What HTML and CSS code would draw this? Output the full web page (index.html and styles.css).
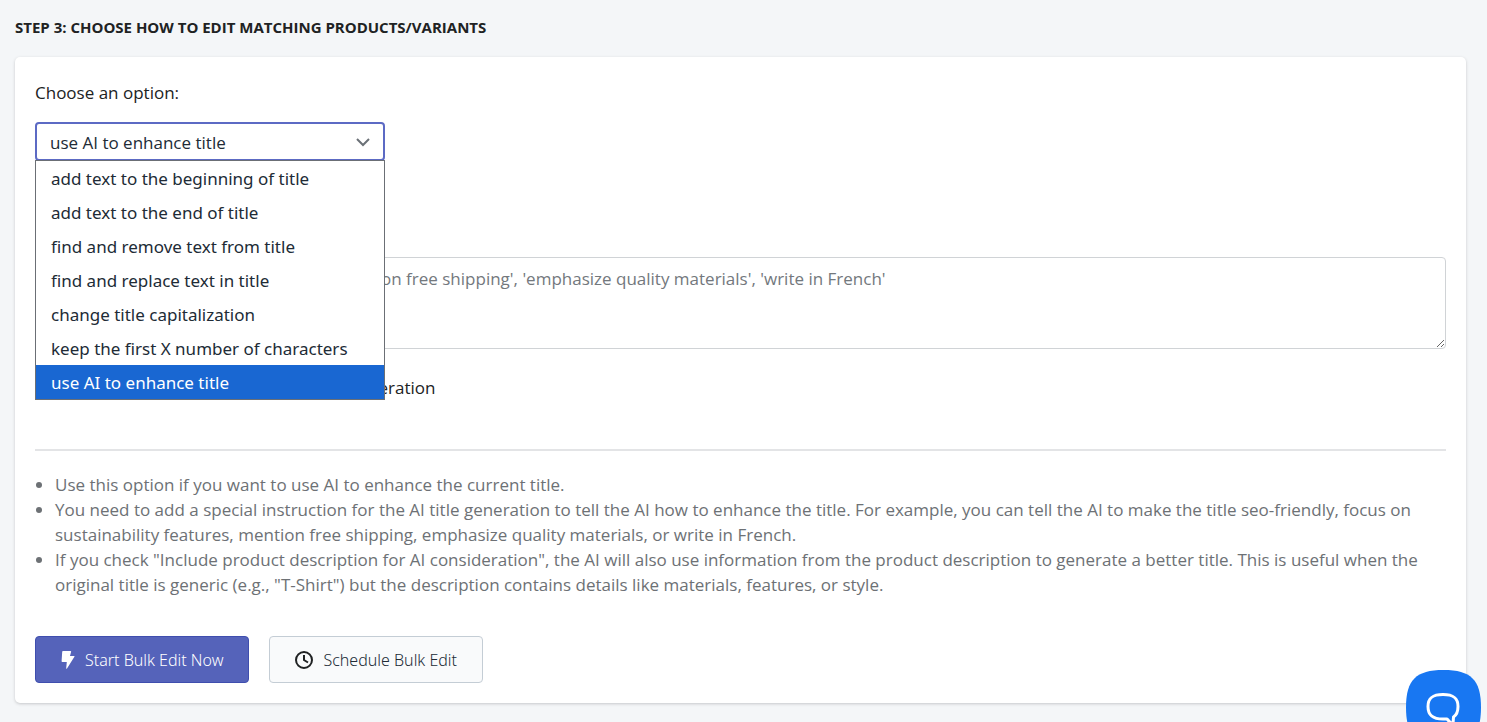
FILE: index.html
```html
<!DOCTYPE html>
<html lang="en">
<head>
  <meta charset="UTF-8" />
  <meta name="viewport" content="width=device-width, initial-scale=1.0" />
  <title>Bulk Edit - Step 3</title>
  <link rel="stylesheet" href="styles.css">
</head>
<body>
  <main class="page">
    <h2 class="step-title">Step 3: Choose how to edit matching products/variants</h2>

    <form class="card">
      <label class="field-label" for="editOption">Choose an option:</label>
      <div class="select-wrap">
        <select id="editOption" class="select" name="editOption">
          <option>add text to the beginning of title</option>
          <option>add text to the end of title</option>
          <option>find and remove text from title</option>
          <option>find and replace text in title</option>
          <option>change title capitalization</option>
          <option>keep the first X number of characters</option>
          <option selected>use AI to enhance title</option>
        </select>
        <svg class="chevron" viewBox="0 0 16 16" aria-hidden="true"><path d="M2 5l6 6 6-6" /></svg>
        <ul class="options" role="listbox" aria-label="Choose an option">
          <li role="option">add text to the beginning of title</li>
          <li role="option">add text to the end of title</li>
          <li role="option">find and remove text from title</li>
          <li role="option">find and replace text in title</li>
          <li role="option">change title capitalization</li>
          <li role="option">keep the first X number of characters</li>
          <li role="option" class="active" aria-selected="true">use AI to enhance title</li>
        </ul>
      </div>

      <textarea class="textarea" name="instruction" aria-label="Special instruction" placeholder="e.g. 'focus on sustainable features', 'mention free shipping', 'emphasize quality materials', 'write in French'"></textarea>

      <div class="check-row">
        <input type="checkbox" id="includeDescription" name="includeDescription" />
        <label for="includeDescription">Include product description for AI consideration</label>
      </div>

      <hr class="divider" />

      <ul class="help">
        <li>Use this option if you want to use AI to enhance the current title.</li>
        <li>You need to add a special instruction for the AI title generation to tell the AI how to enhance the title. For example, you can tell the AI to make the title seo-friendly, focus on sustainability features, mention free shipping, emphasize quality materials, or write in French.</li>
        <li>If you check "Include product description for AI consideration", the AI will also use information from the product description to generate a better title. This is useful when the original title is generic (e.g., "T-Shirt") but the description contains details like materials, features, or style.</li>
      </ul>

      <div class="btn-container">
        <button type="button" class="btn btn-primary">
          <svg class="icon-bolt" viewBox="0 0 14 18" aria-hidden="true"><path d="M2 0h7.500q.8 0 .6.8L9 5h4q.9 0 .4.8L6 17.500q-.8.700-.8-.3L5.800 11H1.300q-.8 0-.7-.8L1.200.8Q1.300 0 2 0z" /></svg>
          Start Bulk Edit Now
        </button>
        <button type="button" class="btn btn-secondary">
          <svg class="icon-clock" viewBox="0 0 18 18" aria-hidden="true"><circle cx="9" cy="9" r="8" /><path d="M9 4v5l4 2.500" /></svg>
          Schedule Bulk Edit
        </button>
      </div>
    </form>
  </main>

  <button type="button" class="chat" aria-label="Open chat">
    <svg viewBox="0 0 75 75" aria-hidden="true">
      <path class="chat-bg" d="M37.500 0C65 0 75 10 75 37.500S65 75 37.500 75 0 65 0 37.500 10 0 37.500 0z" />
      <path class="chat-line" d="M37 24.500c10 0 15 3 15 12 0 5-1.500 8.500-4.500 10.500l-.5 7c-3-1-4.500-3-6-5h-4c-10 0-15-3.500-15-12.500s5-12 15-12z" />
    </svg>
  </button>
</body>
</html>
```
FILE: styles.css
```css
* {
    box-sizing: border-box;
}

body {
    margin: 0;
    min-height: 100vh;
    background: #f4f6f8;
    color: #202223;
    font-family: "Segoe UI", "Open Sans", "Noto Sans", sans-serif;
    font-size: 17px;
    line-height: 25px;
}

.page {
    padding: 15px 21px 19px 15px;
}

.step-title {
    margin: 0 0 17px;
    font-size: 15px;
    line-height: 25px;
    font-weight: 700;
    text-transform: uppercase;
}

.card {
    padding: 23px 20px 20px;
    background: #fff;
    border-radius: 5px;
    box-shadow: 0 1px 3px rgba(63, 63, 68, 0.25);
}

.field-label {
    display: block;
}

.select-wrap {
    position: relative;
    width: 350px;
    max-width: 100%;
    margin-top: 17px;
}

.select {
    appearance: none;
    display: block;
    width: 100%;
    height: 39px;
    padding: 1px 40px 0 13px;
    border: 2px solid #5c6ac4;
    border-radius: 4px;
    outline: none;
    background: #fff;
    color: #212b36;
    font: inherit;
}

.chevron {
    position: absolute;
    top: 12px;
    right: 14px;
    width: 16px;
    height: 16px;
    fill: none;
    stroke: #6b7177;
    stroke-width: 2;
    pointer-events: none;
}

.options {
    position: absolute;
    z-index: 1;
    top: 38px;
    left: 0;
    width: 100%;
    margin: 0;
    padding: 0;
    border: 1px solid #6b6f75;
    background: #fff;
    color: #212b36;
    font-family: "Segoe UI", "Noto Sans", sans-serif;
    list-style: none;
}

.options li {
    padding: 2px 15px 0;
    line-height: 32px;
}

.options .active {
    background: #1967d2;
    color: #fff;
}

.textarea {
    display: block;
    width: 100%;
    height: 92px;
    margin-top: 96px;
    padding: 8px 14px;
    border: 1px solid #d0d3d6;
    border-radius: 4px;
    background: #fff;
    color: inherit;
    font: inherit;
    resize: vertical;
}

.textarea::placeholder {
    color: #73787d;
}

.check-row {
    display: flex;
    align-items: center;
    gap: 6px;
    margin-top: 26px;
}

.check-row input {
    width: 16px;
    height: 16px;
    margin: 0;
}

.divider {
    height: 2px;
    margin: 49px 0 21px;
    border: 0;
    background: #e3e4e6;
}

.help {
    margin: 0;
    padding-left: 20px;
    color: #6d7175;
}

.btn-container {
    display: flex;
    flex-wrap: wrap;
    gap: 20px;
    margin-top: 39px;
}

.btn {
    display: flex;
    align-items: center;
    gap: 10px;
    height: 47px;
    padding: 1px 25px 0;
    border: 1px solid #c4cdd5;
    border-radius: 4px;
    background: #f9fafb;
    color: #212b36;
    font-family: "Segoe UI", "Noto Sans", sans-serif;
    font-size: 16px;
    font-weight: 300;
    cursor: pointer;
}

.btn-primary {
    border-color: #3f4eae;
    background: #5563ba;
    color: #fff;
}

.icon-bolt {
    width: 14px;
    height: 18px;
    fill: #fff;
}

.icon-clock {
    width: 18px;
    height: 18px;
    fill: none;
    stroke: #202223;
    stroke-width: 2;
}

/* chat launcher, partly below the fold */
.chat {
    position: fixed;
    right: 6px;
    bottom: -23px;
    width: 75px;
    height: 75px;
    padding: 0;
    border: 0;
    background: none;
    cursor: pointer;
}

.chat svg {
    display: block;
}

.chat-bg {
    fill: #1877f2;
}

.chat-line {
    fill: none;
    stroke: #fff;
    stroke-width: 3;
    stroke-linejoin: round;
}
```
